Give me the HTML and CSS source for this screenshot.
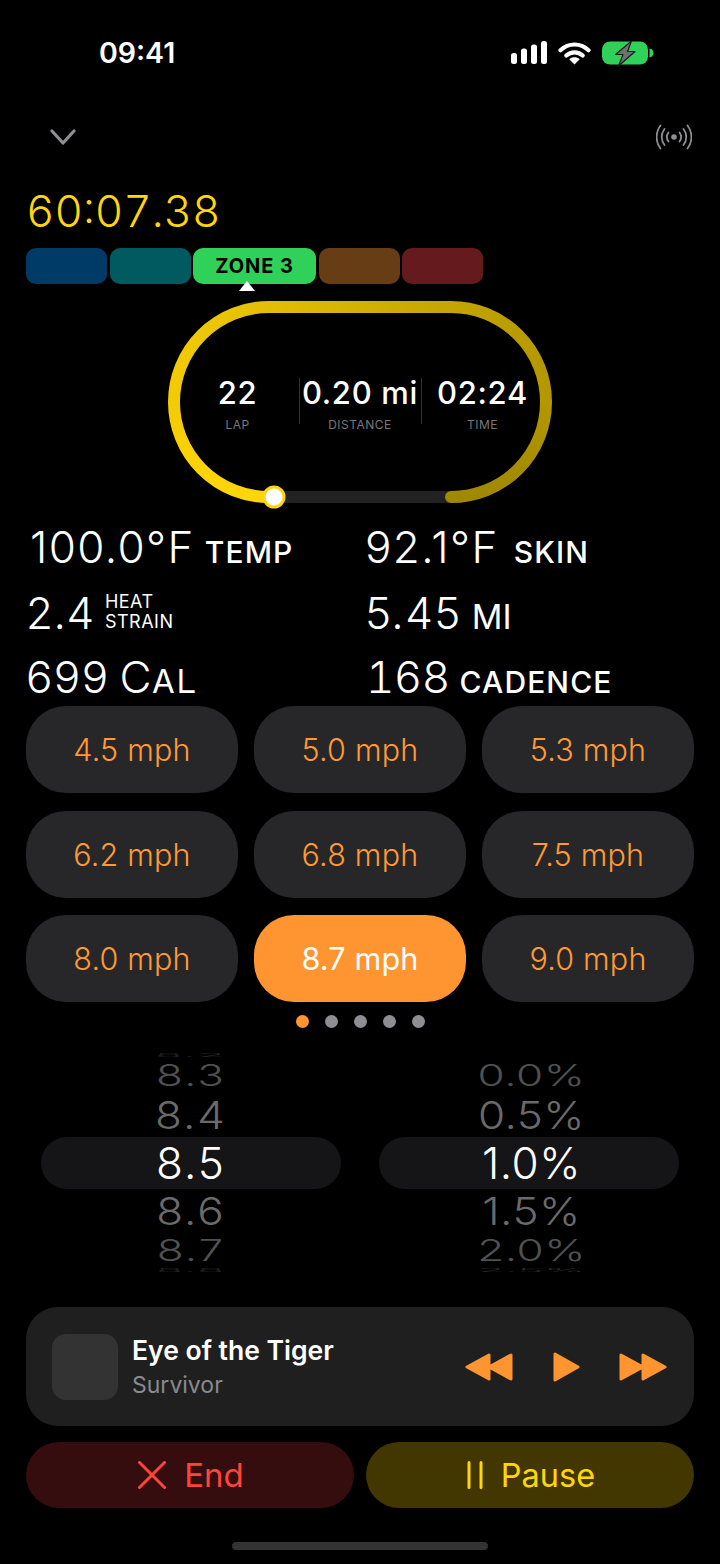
FILE: index.html
```html
<!DOCTYPE html>
<html lang="en">
<head>
<meta charset="utf-8">
<title>Workout</title>
<link rel="stylesheet" href="styles.css">
</head>
<body>
<main class="screen">
  <header class="status">
    <span class="clock">09:41</span>
    <div class="status-icons">
      <svg class="signal" width="36" height="24" viewBox="0 0 36 24"><rect x="0" y="12" width="6" height="11" rx="2.5"/><rect x="10" y="7.5" width="6" height="15.5" rx="2.5"/><rect x="20" y="3.5" width="6" height="19.5" rx="2.5"/><rect x="30" y="0" width="6" height="23" rx="2.5"/></svg>
      <svg class="wifi" width="33" height="24" viewBox="0 0 33 24"><path d="M2.5 9.2C10.5 1.6 22.5 1.6 30.5 9.2" /><path d="M8.3 14.6C12.9 10.2 20.1 10.2 24.7 14.6"/><path class="wifi-dot" d="M16.5 23.5l-5.2-5.2c3-2.6 7.4-2.6 10.4 0z"/></svg>
      <svg class="battery" width="52" height="26" viewBox="0 0 52 26"><rect x="0" y="0.5" width="46" height="23" rx="8" fill="#30d158"/><path d="M47.5 7.5c2.5.5 4 2.2 4 4.5s-1.500 4-4 4.500z" fill="#30d158"/><path d="M29.500 0 13.500 13.500h7.500L16.500 25 33 10.500h-7.500z" fill="#707070" stroke="#1a1a1a" stroke-width="1.200" stroke-linejoin="round"/></svg>
    </div>
  </header>

  <nav class="nav">
    <svg width="26" height="16" viewBox="0 0 26 16"><path d="M2 2l11 12L24 2" fill="none" stroke="#8e8e93" stroke-width="3.200" stroke-linecap="round" stroke-linejoin="round"/></svg>
    <svg width="36" height="26" viewBox="1 0 36 26" fill="none" stroke="#8e8e93" stroke-width="1.800" stroke-linecap="round"><circle cx="19" cy="13" r="2.800" fill="#8e8e93" stroke="none"/><path d="M13.500 8.500a7.500 7.500 0 0 0 0 9M24.500 8.500a7.500 7.500 0 0 1 0 9M9.500 5a13 13 0 0 0 0 16M28.500 5a13 13 0 0 1 0 16M5.500 1.500a19 19 0 0 0 0 23M32.500 1.500a19 19 0 0 1 0 23"/></svg>
  </nav>

  <div class="timer">60:07.38</div>

  <div class="zones">
    <div class="zone zone-blue"></div>
    <div class="zone zone-teal"></div>
    <div class="zone zone-active">ZONE 3</div>
    <div class="zone zone-brown"></div>
    <div class="zone zone-red"></div>
  </div>

  <section class="lap">
    <svg class="track" width="384" height="202" viewBox="0 0 384 202" fill="none" stroke-width="12">
      <defs>
        <linearGradient id="g1" gradientUnits="userSpaceOnUse" x1="0" y1="196" x2="0" y2="101"><stop offset="0" stop-color="#ffd60a"/><stop offset="1" stop-color="#f2cb06"/></linearGradient>
        <linearGradient id="g2" gradientUnits="userSpaceOnUse" x1="6" y1="0" x2="378" y2="0"><stop offset="0" stop-color="#f2cb06"/><stop offset="1" stop-color="#b49800"/></linearGradient>
        <linearGradient id="g3" gradientUnits="userSpaceOnUse" x1="0" y1="101" x2="0" y2="196"><stop offset="0" stop-color="#b49800"/><stop offset="1" stop-color="#a08800"/></linearGradient>
      </defs>
      <path d="M106 196H283" stroke="#222"/>
      <path d="M283 196A95 95 0 0 0 378 101" stroke="url(#g3)" stroke-linecap="round"/>
      <path d="M378 101A95 95 0 0 0 283 6H101A95 95 0 0 0 6 101" stroke="url(#g2)"/>
      <path d="M6 101A95 95 0 0 0 101 196H106" stroke="url(#g1)"/>
      <circle cx="106" cy="196" r="10" fill="#fff" stroke="#ffd60a" stroke-width="3"/>
    </svg>
    <div class="lap-info">
      <div class="lap-cell"><strong>22</strong><span>LAP</span></div>
      <div class="lap-cell lap-mid"><strong>0.20 mi</strong><span>DISTANCE</span></div>
      <div class="lap-cell"><strong>02:24</strong><span>TIME</span></div>
    </div>
  </section>

  <section class="stats">
    <div class="stat stat-tight"><span class="num">100.0°F</span><span class="unit">TEMP</span></div>
    <div class="stat stat-wide"><span class="num">92.1°F</span><span class="unit">SKIN</span></div>
    <div class="stat stat-left"><span class="num num-tight">2.4</span><span class="unit-stack">HEAT<br>STRAIN</span></div>
    <div class="stat stat-tight"><span class="num">5.45</span><span class="unit unit-thin">MI</span></div>
    <div class="stat stat-left stat-low stat-tight"><span class="num">699</span><span class="cal">Cal</span></div>
    <div class="stat stat-low stat-shift stat-tight"><span class="num num-tab">168</span><span class="unit">CADENCE</span></div>
  </section>

  <section class="speeds">
    <button class="speed">4.5 mph</button>
    <button class="speed">5.0 mph</button>
    <button class="speed">5.3 mph</button>
    <button class="speed">6.2 mph</button>
    <button class="speed">6.8 mph</button>
    <button class="speed">7.5 mph</button>
    <button class="speed">8.0 mph</button>
    <button class="speed speed-on">8.7 mph</button>
    <button class="speed">9.0 mph</button>
  </section>

  <div class="dots"><i class="dot dot-on"></i><i class="dot"></i><i class="dot"></i><i class="dot"></i><i class="dot"></i></div>

  <section class="wheels">
    <div class="wheel">
      <div class="row r-edge">8.2</div>
      <div class="row r-far">8.3</div>
      <div class="row r-near">8.4</div>
      <div class="row r-sel">8.5</div>
      <div class="row r-near">8.6</div>
      <div class="row r-far">8.7</div>
      <div class="row r-edge">8.8</div>
    </div>
    <div class="wheel wheel-pct">
      <div class="row r-edge">&nbsp;</div>
      <div class="row r-far">0.0%</div>
      <div class="row r-near">0.5%</div>
      <div class="row r-sel">1.0%</div>
      <div class="row r-near">1.5%</div>
      <div class="row r-far">2.0%</div>
      <div class="row r-edge">2.5%</div>
    </div>
  </section>

  <section class="music">
    <div class="art"></div>
    <div class="track-text">
      <div class="song">Eye of the Tiger</div>
      <div class="artist">Survivor</div>
    </div>
    <div class="controls">
      <svg width="48" height="28" viewBox="0 0 48 28"><path d="M24 2v24L2 14zM46 2v24L24 14z"/></svg>
      <svg width="28" height="30" viewBox="0 0 28 30"><path d="M3 2v26l23-13z"/></svg>
      <svg width="48" height="28" viewBox="0 0 48 28"><path d="M2 2v24l22-12zM24 2v24l22-12z"/></svg>
    </div>
  </section>

  <section class="actions">
    <button class="action action-end">
      <svg width="28" height="28" viewBox="0 0 28 28"><path d="M1.500 1.500l25 25M26.500 1.500l-25 25" fill="none" stroke="#ff453a" stroke-width="3" stroke-linecap="round"/></svg>
      End
    </button>
    <button class="action action-pause">
      <svg width="16" height="28" viewBox="0 0 16 28"><path d="M2 1.500v25M14 1.500v25" fill="none" stroke="#ffd60a" stroke-width="3" stroke-linecap="round"/></svg>
      Pause
    </button>
  </section>

  <div class="home"></div>
</main>
</body>
</html>
```
FILE: styles.css
```css
* { box-sizing: border-box; }
html, body { margin: 0; padding: 0; background: #000; }
body { font-family: Inter, "Liberation Sans", sans-serif; color: #fff; }
.screen { width: 720px; height: 1564px; overflow: hidden; display: flex; flex-direction: column; }

.status { height: 108px; display: flex; justify-content: space-between; padding: 41px 66px 0 99px; }
.clock { font-size: 28.500px; font-weight: 600; line-height: 24px; }
.status-icons { display: flex; gap: 11px; align-items: flex-start; }
.signal { fill: #fff; }
.wifi { fill: none; stroke: #fff; stroke-width: 4.2; stroke-linecap: round; }
.wifi-dot { fill: #fff; stroke: none; }

.nav { height: 58px; display: flex; justify-content: space-between; align-items: center; padding: 0 28px 0 50px; }

.timer { height: 82px; padding-top: 19px; padding-left: 26px; font-size: 44px; line-height: 52px; font-weight: 300; color: #ffd60a; font-feature-settings: "tnum"; }

.zones { height: 36px; display: flex; gap: 2.500px; padding-left: 26px; }
.zone { width: 81px; border-radius: 10px; }
.zone-blue { background: #003a66; }
.zone-teal { background: #005a5f; }
.zone-active { position: relative; width: 123px; background: #30d158; color: #000; font-size: 20px; font-weight: 700; line-height: 36px; text-align: center; letter-spacing: 0.9px; }
.zone-active::after { content: ""; position: absolute; left: 46px; bottom: -7px; border-left: 8px solid transparent; border-right: 8px solid transparent; border-bottom: 10px solid #fff; }
.zone-brown { background: #663d14; }
.zone-red { background: #651b1d; }

.lap { display: grid; justify-content: center; margin-top: 17px; height: 202px; }
.track, .lap-info { grid-area: 1 / 1; }
.track { overflow: visible; }
.lap-info { display: grid; grid-template-columns: 122px 123px 122px; justify-content: center; align-content: start; padding-top: 77px; }
.lap-cell { display: flex; flex-direction: column; align-items: center; height: 46px; }
.lap-cell strong { font-size: 31px; font-weight: 500; line-height: 30px; white-space: nowrap; letter-spacing: 0.7px; }
.lap-cell span { margin-top: 10px; font-size: 12px; line-height: 14px; color: #77777b; letter-spacing: 0.5px; }
.lap-mid { border-left: 1px solid #333; border-right: 1px solid #333; }

.stats { height: 203px; display: grid; grid-template-columns: 335px 1fr; grid-template-rows: 66px 62px 65px; padding: 14px 0 0 30px; }
.stat { display: flex; align-items: baseline; gap: 12px; white-space: nowrap; }
.stat-tight { gap: 10px; }
.stat-wide { gap: 15px; }
.stat-left { margin-left: -4px; }
.stat-low { padding-top: 2px; }
.stat-shift { padding-left: 1px; }
.num { font-size: 44px; font-weight: 300; line-height: 60px; letter-spacing: 1.400px; }
.num-tight { letter-spacing: 0.6px; }
.num-tab { letter-spacing: -0.6px; font-feature-settings: "tnum"; }
.unit { font-size: 30px; font-weight: 500; letter-spacing: 1.100px; }
.unit-thin { font-weight: 400; font-size: 34px; letter-spacing: 0; }
.cal { font-size: 44px; font-weight: 300; font-variant: small-caps; letter-spacing: 1px; }
.unit-stack { font-size: 18px; line-height: 20px; font-weight: 400; letter-spacing: 0.5px; align-self: center; margin-top: -4px; margin-left: -2px; }

.speeds { display: grid; grid-template-columns: repeat(3, 212px); grid-auto-rows: 87px; gap: 17.500px 16px; padding-left: 26px; }
.speed { border: 0; padding: 0; border-radius: 40px; background: #27272a; color: #ff9a33; font-family: inherit; font-size: 30.500px; font-weight: 350; letter-spacing: 0.2px; }
.speed-on { background: #ff9530; color: #fff; font-weight: 400; }

.dots { height: 38px; display: flex; gap: 16px; justify-content: center; align-items: center; }
.dot { width: 13px; height: 13px; border-radius: 50%; background: #8e8e93; }
.dot-on { background: #ff9530; }

.wheels { height: 220px; margin-top: 12.500px; display: grid; grid-template-columns: 300px 300px; justify-content: space-between; padding: 0 41px; overflow: hidden; }
.wheel { display: flex; flex-direction: column; align-items: center; }
.row { width: 100%; text-align: center; font-size: 44px; font-weight: 300; white-space: nowrap; letter-spacing: 2px; line-height: 1; display: flex; align-items: center; justify-content: center; }
.wheel-pct .row { letter-spacing: 0.5px; padding-left: 5px; }
.r-edge { height: 5px; color: #2a2a2a; transform: scaleY(.1); }
.r-far { height: 35px; color: #505050; transform: scaleY(.66); }
.r-near { height: 44px; color: #6a6a6a; transform: scaleY(.88); }
.r-sel { height: 52px; background: #151517; border-radius: 26px; color: #fff; }

.music { height: 119px; margin: 34.500px 26px 0; padding: 0 27px 0 26px; display: flex; align-items: center; border-radius: 32px; background: #1f1f1f; }
.art { width: 66px; height: 66px; border-radius: 14px; background: #333; }
.track-text { flex: 1; margin-left: 14px; padding-top: 3px; }
.song { font-size: 26.500px; font-weight: 560; line-height: 34px; }
.artist { font-size: 23px; line-height: 37px; color: #8a8a8e; }
.controls { display: flex; align-items: center; gap: 39px; }
.controls svg { fill: #ff9530; stroke: #ff9530; stroke-width: 3; stroke-linejoin: round; }

.actions { margin: 16px 26px 0; display: grid; grid-template-columns: 328px 328px; gap: 12px; }
.action { height: 66px; border: 0; border-radius: 33px; padding: 0 0 0 2px; display: flex; align-items: center; justify-content: center; gap: 18px; font-family: inherit; font-size: 32.500px; font-weight: 400; }
.action-end { background: #360d0f; color: #ff453a; font-size: 33px; }
.action-pause { background: #423700; color: #ffd60a; }

.home { width: 256px; height: 8px; margin: 34px auto 0; border-radius: 4px; background: #333; }
```
